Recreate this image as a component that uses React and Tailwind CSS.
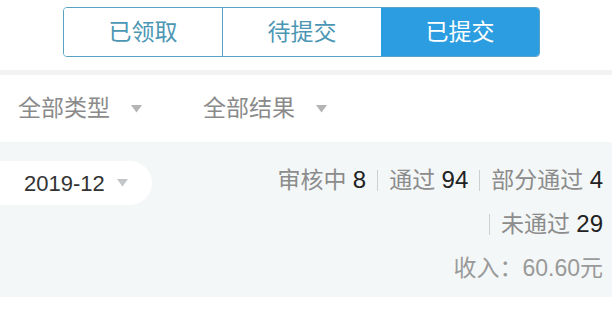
import React from 'react'

const Caret = ({ color = '#b4b4b4', className = '' }) => (
    <svg width="11" height="8" viewBox="0 0 11 8" className={className}>
        <polygon points="0,0 11,0 5.5,7.5" fill={color} />
    </svg>
)

const Sep = () => <span className="mx-[11px] inline-block h-[21px] w-px bg-[#cfcfcf] align-[-3px]" />

const Num = ({ children }) => <span className="text-[24px] text-[#222]">{children}</span>

const tabs = [
    { label: '已领取', active: false },
    { label: '待提交', active: false },
    { label: '已提交', active: true },
]

export default function App() {
    return (
        <div
            className="flex h-[316px] w-[612px] flex-col overflow-hidden bg-white"
            style={{ fontFamily: '"Liberation Sans", "Noto Sans CJK SC", sans-serif' }}
        >
            {/* segmented tabs */}
            <div className="flex h-[70px] shrink-0 pl-[63px] pt-[7px]">
                <div className="flex h-[50px] w-[477px] overflow-hidden rounded-[4px] border-[1.5px] border-[#5aa2c2]">
                    {tabs.map((tab, i) => (
                        <div
                            key={tab.label}
                            className={
                                'flex flex-1 items-center justify-center text-[23px] ' +
                                (tab.active ? 'bg-[#2b9de0] text-white' : 'bg-white text-[#4b96b4]') +
                                (i === 1 ? ' border-l-[1.5px] border-[#5aa2c2]' : '')
                            }
                        >
                            {tab.label}
                        </div>
                    ))}
                </div>
            </div>

            <div className="h-[5px] shrink-0 bg-[#f3f3f3]" />

            {/* filters */}
            <div className="flex h-[67px] shrink-0 items-center pl-[18px] text-[23px] text-[#8a8a8a]">
                <div className="flex w-[185px] items-center">
                    <span>全部类型</span>
                    <Caret className="ml-[21px]" />
                </div>
                <div className="flex items-center">
                    <span>全部结果</span>
                    <Caret className="ml-[21px]" />
                </div>
            </div>

            {/* month summary */}
            <div className="flex h-[155px] shrink-0 justify-between bg-[#f4f7f7]">
                <div className="pt-[19px]">
                    <div className="flex h-[44px] w-[152px] items-center rounded-r-full bg-white pl-[24px] text-[22px] text-[#333]">
                        <span>2019-12</span>
                        <Caret color="#c2c6c8" className="ml-[12px]" />
                    </div>
                </div>
                <div className="pr-[9px] pt-[16px] text-right text-[23px] leading-[44px] text-[#8c8c8c]">
                    <div>
                        审核中 <Num>8</Num>
                        <Sep />
                        通过 <Num>94</Num>
                        <Sep />
                        部分通过 <Num>4</Num>
                    </div>
                    <div>
                        <Sep />
                        未通过 <Num>29</Num>
                    </div>
                    <div className="text-[#9a9a9a]">收入：60.60元</div>
                </div>
            </div>

            <div className="flex-1 bg-white" />
        </div>
    )
}
